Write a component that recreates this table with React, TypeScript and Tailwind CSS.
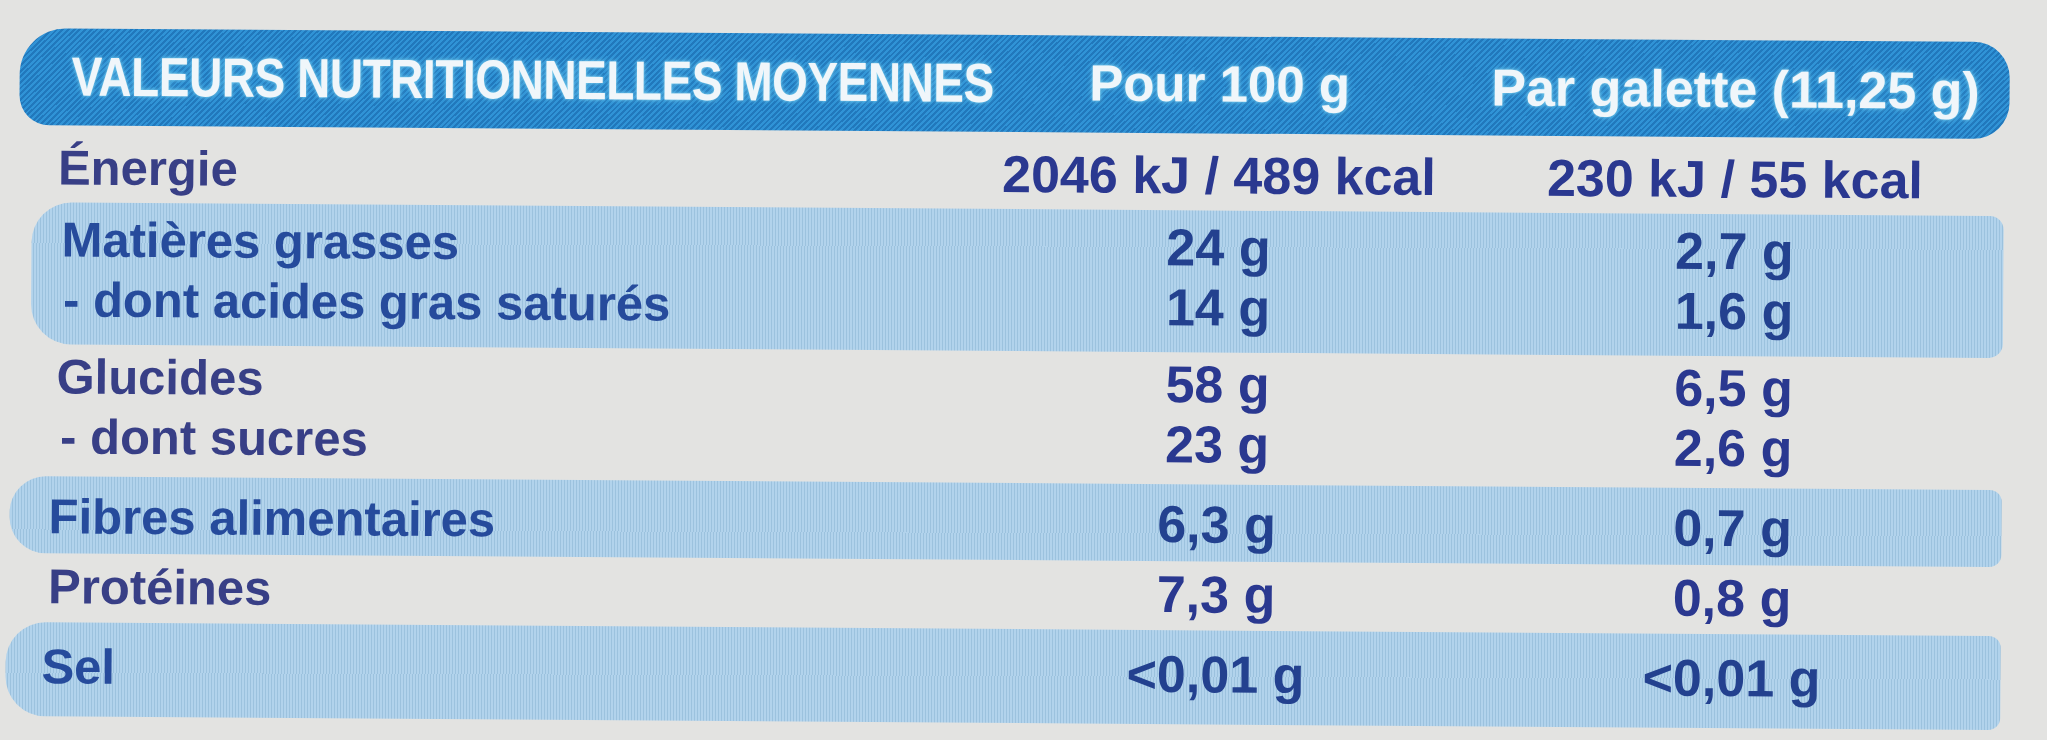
import React from "react";

type Line = { label: string; pour: string; par: string; pl: string };

const font = "font-['Liberation_Sans',Arial,sans-serif]";

function Lines({ lines, grid, band }: { lines: Line[]; grid: string; band: boolean }) {
  const labelColor = band ? "text-[#264b9c]" : "text-[#383f86]";
  const valueColor = band ? "text-[#23418f]" : "text-[#2a3890]";
  return (
    <>
      {lines.map((l) => (
        <div key={l.label} className={`grid ${grid} h-[60px] items-center leading-[60px]`}>
          <span className={`${l.pl} whitespace-nowrap text-[49px] font-bold ${labelColor}`}>{l.label}</span>
          <span className={`text-center text-[52px] font-bold ${valueColor}`}>{l.pour}</span>
          <span className={`text-center text-[52px] font-bold ${valueColor}`}>{l.par}</span>
        </div>
      ))}
    </>
  );
}

const bandBg =
  "bg-[repeating-linear-gradient(90deg,#b2d3ec_0px,#b2d3ec_2px,#9cc2de_2px,#9cc2de_3px)]";

export default function App() {
  return (
    <div className={`h-[740px] w-[2047px] overflow-hidden bg-[#e3e3e1] ${font}`}>
      <div className="origin-top-left rotate-[0.4deg]">
        {/* header band */}
        <div className="ml-[20px] mt-[28px] h-[97px] w-[1990px] rounded-l-[30px] rounded-tl-[46px] rounded-r-[36px] bg-[repeating-linear-gradient(135deg,#3093d6_0px,#3093d6_2px,#2178bc_2px,#2178bc_4px)]">
          <div className="grid h-full grid-cols-[940px_520px_512px] items-center text-[#f0f6fa] [text-shadow:0_0_3px_#7fd0ef,0_0_7px_#5ab6e2]">
            <span className="pl-[52px]">
              <span className="inline-block origin-left scale-x-[0.835] whitespace-nowrap text-[55px] font-bold tracking-[-0.5px]">
                VALEURS NUTRITIONNELLES MOYENNES
              </span>
            </span>
            <span className="text-center text-[51px] font-bold whitespace-nowrap">Pour 100 g</span>
            <span className="text-center text-[52px] font-bold whitespace-nowrap">Par galette (11,25 g)</span>
          </div>
        </div>

        <div className="mt-[12px]">
          <Lines
            band={false}
            grid="grid-cols-[960px_520px_512px]"
            lines={[{ label: "Énergie", pour: "2046 kJ / 489 kcal", par: "230 kJ / 55 kcal", pl: "pl-[59px]" }]}
          />
        </div>

        <div className={`ml-[33px] mt-[5px] w-[1972px] rounded-l-[40px] rounded-r-[14px] pt-[7px] pb-[15px] ${bandBg}`}>
          <Lines
            band
            grid="grid-cols-[927px_520px_512px]"
            lines={[
              { label: "Matières grasses", pour: "24 g", par: "2,7 g", pl: "pl-[30px]" },
              { label: "- dont acides gras saturés", pour: "14 g", par: "1,6 g", pl: "pl-[32px]" },
            ]}
          />
        </div>

        <div className="mt-[2px]">
          <Lines
            band={false}
            grid="grid-cols-[960px_520px_512px]"
            lines={[
              { label: "Glucides", pour: "58 g", par: "6,5 g", pl: "pl-[59px]" },
              { label: "- dont sucres", pour: "23 g", par: "2,6 g", pl: "pl-[63px]" },
            ]}
          />
        </div>

        <div className={`ml-[13px] mt-[10px] w-[1992px] rounded-l-[36px] rounded-r-[12px] pt-[10px] pb-[7px] ${bandBg}`}>
          <Lines
            band
            grid="grid-cols-[947px_520px_512px]"
            lines={[{ label: "Fibres alimentaires", pour: "6,3 g", par: "0,7 g", pl: "pl-[39px]" }]}
          />
        </div>

        <div className="mt-[3px]">
          <Lines
            band={false}
            grid="grid-cols-[960px_520px_512px]"
            lines={[{ label: "Protéines", pour: "7,3 g", par: "0,8 g", pl: "pl-[52px]" }]}
          />
        </div>

        <div className={`ml-[10px] mt-[6px] w-[1995px] rounded-l-[40px] rounded-r-[12px] pt-[14px] pb-[20px] ${bandBg}`}>
          <Lines
            band
            grid="grid-cols-[950px_520px_512px]"
            lines={[{ label: "Sel", pour: "<0,01 g", par: "<0,01 g", pl: "pl-[36px]" }]}
          />
        </div>
      </div>
    </div>
  );
}
